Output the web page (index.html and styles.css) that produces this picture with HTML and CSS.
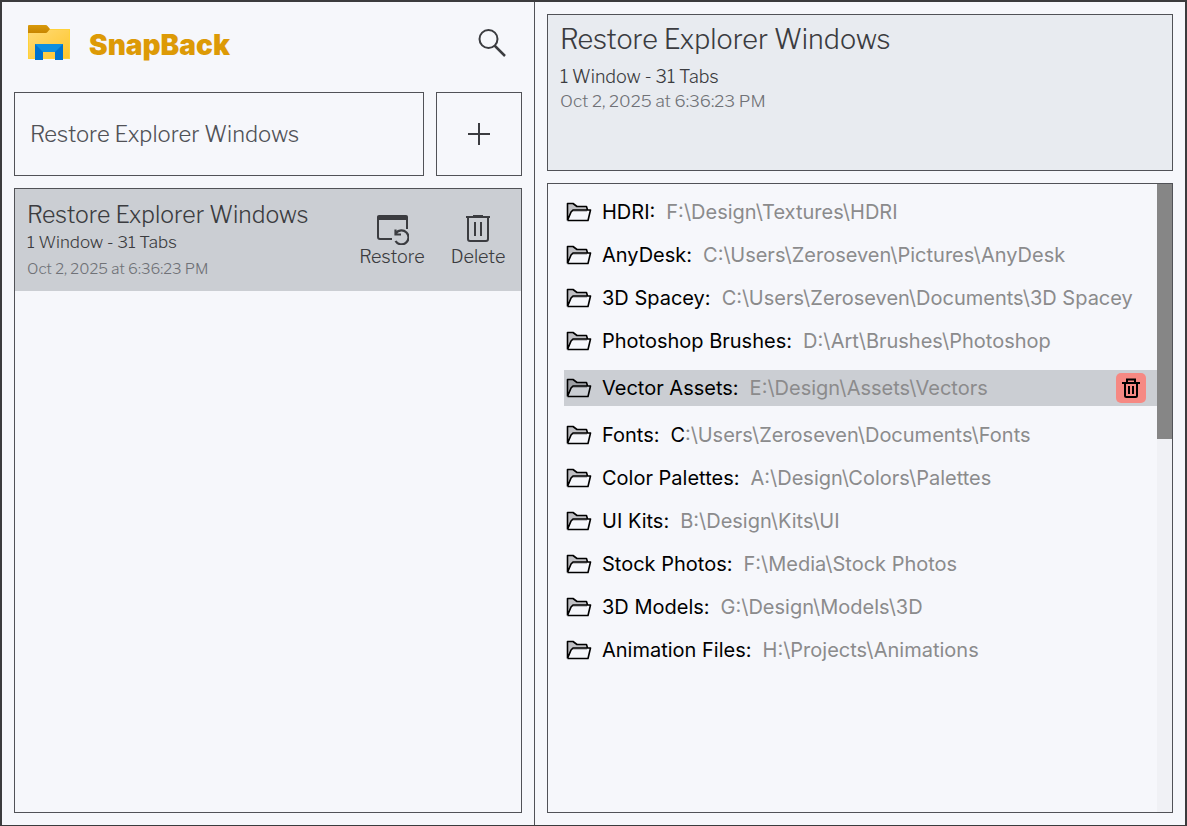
FILE: index.html
```html
<!DOCTYPE html>
<html lang="en">
<head>
<meta charset="utf-8">
<meta name="viewport" content="width=device-width, initial-scale=1">
<title>SnapBack</title>
<link rel="stylesheet" href="styles.css">
</head>
<body>
<svg class="symbols" aria-hidden="true">
  <symbol id="folder" viewBox="0 0 26 20">
    <path d="M2 18V2h6l3 3h9l1 3v2H6z" fill="#000" fill-opacity=".22"/>
    <path d="M1.500 18.500V1.500H7L11 4.500H20.500L21.500 8M1.500 18.500H22L24.500 8H7L5 10L1.500 18.500" fill="none" stroke="#000" stroke-width="1.600" stroke-linejoin="round"/>
  </symbol>
</svg>
<div class="window">
  <section class="sidebar">
    <header class="brand">
      <svg class="brand-logo" viewBox="0 0 42 36" aria-hidden="true">
        <defs>
          <linearGradient id="sheet" x1="0" y1="0" x2="1" y2="1"><stop offset="0" stop-color="#ffda75"/><stop offset="1" stop-color="#ffc62c"/></linearGradient>
          <linearGradient id="tab" x1="0" y1="0" x2="0" y2="1"><stop offset="0" stop-color="#d99a0b"/><stop offset="1" stop-color="#c78500"/></linearGradient>
        </defs>
        <path d="M0 4H42V34H0z" fill="#ffd23a"/>
        <path d="M1 5H41V33H1z" fill="url(#sheet)"/>
        <path d="M18 0H42V4H22z" fill="#f6f7fb"/>
        <path d="M0 1Q0 0 1 0H17.500Q19 0 19.500 1L22 4L19.500 7Q19 8 17.500 8H0z" fill="url(#tab)"/>
        <path d="M7 19H35V35H27V27H15V35H7z" fill="#0072cf"/>
        <path d="M7 19H35L27 27H15z" fill="#0f8fe0"/>
      </svg>
      <h1 class="brand-name">SnapBack</h1>
      <button class="search" aria-label="Search">
        <svg class="search-icon" viewBox="0 0 28 28" fill="none" stroke="#3b3c40" stroke-width="2"><circle cx="10.500" cy="10" r="9"/><path d="M16.500 16.500L27 27" stroke-width="2.500"/></svg>
      </button>
    </header>
    <form class="create">
      <input class="name-input" type="text" aria-label="Session name" value="Restore Explorer Windows">
      <button class="add" type="button" aria-label="Add session">
        <svg class="add-icon" viewBox="0 0 22 22" stroke="#3b3c40" stroke-width="2"><path d="M0 11H22M11 0V22"/></svg>
      </button>
    </form>
    <div class="sessions">
      <article class="session">
        <div class="session-info">
          <h2 class="session-title">Restore Explorer Windows</h2>
          <p class="session-count">1 Window - 31 Tabs</p>
          <p class="session-date">Oct 2, 2025 at 6:36:23 PM</p>
        </div>
        <button class="action">
          <svg class="action-icon" viewBox="0 0 34 30" fill="none" stroke="#3b3c40" stroke-width="2">
            <path d="M17 24H5Q3 24 3 22V3Q3 2 4 2H30Q32 2 32 3V14"/>
            <path d="M2 2Q2 0 4 0H31Q33 0 33 2V5H2z" fill="#3b3c40" stroke="none"/>
            <path d="M21 18A7 7 0 1 1 20.500 26M20.500 14.500V19.500H26" stroke-width="2.200"/>
          </svg>
          <span>Restore</span>
        </button>
        <button class="action">
          <svg class="action-icon" viewBox="0 0 34 30" fill="none" stroke="#3b3c40" stroke-width="2">
            <path d="M5 2H29M12 .500H22M7 3V24Q7 26 9 26H25Q27 26 27 24V3M14 7V21M20 7V21"/>
          </svg>
          <span>Delete</span>
        </button>
      </article>
    </div>
  </section>
  <main class="detail">
    <header class="summary">
      <h2 class="summary-title">Restore Explorer Windows</h2>
      <p class="summary-count">1 Window - 31 Tabs</p>
      <p class="summary-date">Oct 2, 2025 at 6:36:23 PM</p>
    </header>
    <div class="tabs">
      <ul class="tab-list">
        <li class="tab"><svg class="folder"><use href="#folder"/></svg><span>HDRI:</span><span class="path">F:\Design\Textures\HDRI</span></li>
        <li class="tab"><svg class="folder"><use href="#folder"/></svg><span>AnyDesk:</span><span class="path">C:\Users\Zeroseven\Pictures\AnyDesk</span></li>
        <li class="tab"><svg class="folder"><use href="#folder"/></svg><span>3D Spacey:</span><span class="path">C:\Users\Zeroseven\Documents\3D Spacey</span></li>
        <li class="tab"><svg class="folder"><use href="#folder"/></svg><span>Photoshop Brushes:</span><span class="path">D:\Art\Brushes\Photoshop</span></li>
        <li class="tab tab-active"><svg class="folder"><use href="#folder"/></svg><span>Vector Assets:</span><span class="path">E:\Design\Assets\Vectors</span>
          <button class="remove" aria-label="Remove Vector Assets">
            <svg class="remove-icon" viewBox="0 0 18 20" fill="none" stroke="#000" stroke-width="2"><path d="M0 5H18M5 5V1.500H13V5M3 5V17.500Q3 19 4.500 19H13.500Q15 19 15 17.500V5M7 8V16M11 8V16"/></svg>
          </button>
        </li>
        <li class="tab"><svg class="folder"><use href="#folder"/></svg><span>Fonts:</span><span class="path"><span class="drive">C</span>:\Users\Zeroseven\Documents\Fonts</span></li>
        <li class="tab"><svg class="folder"><use href="#folder"/></svg><span>Color Palettes:</span><span class="path">A:\Design\Colors\Palettes</span></li>
        <li class="tab"><svg class="folder"><use href="#folder"/></svg><span>UI Kits:</span><span class="path">B:\Design\Kits\UI</span></li>
        <li class="tab"><svg class="folder"><use href="#folder"/></svg><span>Stock Photos:</span><span class="path">F:\Media\Stock Photos</span></li>
        <li class="tab"><svg class="folder"><use href="#folder"/></svg><span>3D Models:</span><span class="path">G:\Design\Models\3D</span></li>
        <li class="tab"><svg class="folder"><use href="#folder"/></svg><span>Animation Files:</span><span class="path">H:\Projects\Animations</span></li>
      </ul>
      <div class="scroll-track"><div class="scroll-thumb"></div></div>
    </div>
  </main>
</div>
</body>
</html>
```
FILE: styles.css
```css
* { box-sizing: border-box; margin: 0; }
body { background: #f6f7fb; color: #3b3c40; font-family: "Libre Franklin", Inter, sans-serif; font-weight: 300; }
button { padding: 0; border: 0; background: none; color: inherit; font: inherit; cursor: pointer; }
svg { display: block; flex: none; }
.symbols { display: none; }

.window {
  display: grid;
  grid-template-columns: 533fr 650fr;
  min-height: 100vh;
  border: 2px solid #3b3b3d;
  border-bottom-width: 1px;
}

.sidebar { display: flex; flex-direction: column; padding: 0 12px 12px; border-right: 1px solid #515257; }
.brand { display: flex; align-items: center; height: 90px; padding: 0 16px 8px 14px; }
.brand-logo { width: 42px; height: 36px; }
.brand-name { flex: 1; margin-left: 19px; padding-top: 4px; color: #dd9a06; font: 900 28px/36px Inter, sans-serif; }
.search-icon { width: 28px; height: 28px; }

.create { display: flex; gap: 12px; height: 84px; }
.name-input {
  flex: 1; min-width: 0; padding: 0 15px;
  border: 1px solid #515257; border-radius: 0; background: transparent;
  color: #515257; font: inherit; font-size: 22px;
}
.add { display: grid; place-items: center; width: 86px; border: 1px solid #515257; }
.add-icon { width: 22px; height: 22px; }

.sessions { flex: 1; margin-top: 12px; border: 1px solid #515257; }
.session { display: flex; align-items: center; height: 102px; padding: 4px 0 0 12px; background: #cbced3; }
.session-info { flex: 1; }
.session-title { font-size: 23px; font-weight: 300; line-height: 28px; }
.session-count { font-size: 17px; line-height: 26px; }
.session-date { color: #707277; font-size: 15px; line-height: 28px; }
.action { display: flex; flex-direction: column; align-items: center; width: 86px; font-size: 18px; line-height: 24px; }
.action-icon { width: 34px; height: 30px; }

.detail { display: flex; flex-direction: column; gap: 12px; padding: 12px; }
.summary { min-height: 157px; padding: 6px 12px; border: 1px solid #515257; background: #e8ebf0; }
.summary-title { font-size: 27px; font-weight: 300; line-height: 38px; }
.summary-count { margin-top: 6px; font-size: 18px; line-height: 24px; }
.summary-date { color: #707277; font-size: 17px; line-height: 24px; }

.tabs { display: flex; flex: 1; border: 1px solid #515257; }
.tab-list {
  display: flex; flex: 1; flex-direction: column; gap: 15px;
  padding: 14px 0 14px 16px; list-style: none;
  color: #000; font: 400 20px/28px Inter, sans-serif;
}
.tab { display: flex; align-items: center; padding-left: 2px; white-space: nowrap; }
.folder { width: 26px; height: 20px; margin-right: 10px; }
.path { margin-left: 11px; color: #8b8b8c; }
.drive { color: #000; }
.tab-active { height: 36px; padding-right: 11px; background: #cbced3; }
.remove { display: grid; place-items: center; width: 30px; height: 30px; margin-left: auto; border-radius: 5px; background: #f68983; }
.remove-icon { width: 18px; height: 20px; }
.scroll-track { width: 15px; background: #f0f1f5; }
.scroll-thumb { height: 255px; background: #868686; }
```
